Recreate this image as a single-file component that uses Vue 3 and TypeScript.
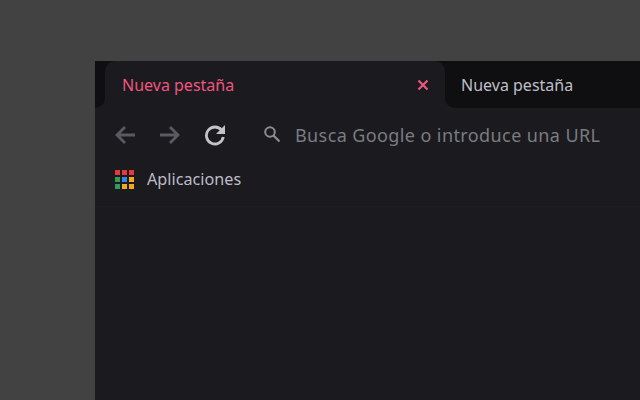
<script setup lang="ts">
const colors: string[] = ['#e5383f','#e5383f','#e5383f','#2f9e55','#2f86ea','#f5a818','#2f9e55','#f5a818','#f5a818']
</script>

<template>
  <div class="page">
    <div class="win">
      <div class="strip">
        <div class="edge"></div>
        <div class="tab active">
          <span class="title">Nueva pestaña</span>
          <svg class="close" width="12" height="12" viewBox="0 0 12 12"><path d="M1.500 1.500 10.500 10.500M10.500 1.500 1.500 10.500" stroke="#e8587f" stroke-width="2.200" fill="none"/></svg>
        </div>
        <div class="tab other"><span class="title2">Nueva pestaña</span></div>
      </div>
      <div class="toolbar">
        <svg class="nav" width="22" height="22" viewBox="0 0 22 22"><path d="M21 11H3M11 3l-8 8 8 8" stroke="#5a5b60" stroke-width="2.800" fill="none"/></svg>
        <svg class="nav" width="22" height="22" viewBox="0 0 22 22"><path d="M1 11H19M11 3l8 8-8 8" stroke="#5a5b60" stroke-width="2.800" fill="none"/></svg>
        <svg class="nav" width="22" height="22" viewBox="0 0 22 22"><path d="M17.600 6.200A8.500 8.500 0 1 0 19.300 13" stroke="#c4c4c6" stroke-width="2.800" fill="none"/><path d="M21 1V10h-9z" fill="#c4c4c6"/></svg>
        <svg class="search" width="18" height="18" viewBox="0 0 18 18"><circle cx="7" cy="7" r="4.800" stroke="#8c8d91" stroke-width="2" fill="none"/><path d="M10.500 10.500 16.500 16.500" stroke="#8c8d91" stroke-width="2.200"/></svg>
        <span class="url">Busca Google o introduce una URL</span>
      </div>
      <div class="bookmarks">
        <div class="apps"><i v-for="(c,i) in colors" :key="i" :style="{background:c}"></i></div>
        <span class="bm">Aplicaciones</span>
      </div>
    </div>
  </div>
</template>

<style>
html,body{margin:0;background:#424242;overflow:hidden}
</style>
<style scoped>
.page{width:640px;height:400px;background:#424242;padding:61px 0 0 95px;box-sizing:border-box;overflow:hidden;font-family:"Noto Sans","Open Sans",sans-serif}
.win{width:545px;height:339px;background:#1a1a1f;display:flex;flex-direction:column}
.strip{height:47px;background:linear-gradient(#0f0f11 50%,#1a1a1f 50%);display:flex;flex:none}
.edge{width:10px;background:#0f0f11;border-bottom-right-radius:10px;flex:none}
.tab{display:flex;align-items:center;box-sizing:border-box}
.active{width:340px;background:#1a1a1f;border-radius:10px 10px 0 0;padding:0 16px 0 17px;justify-content:space-between;flex:none}
.other{flex:1;padding-left:16px;background:#0f0f11;border-bottom-left-radius:10px}
.title{color:#f0557f;font-size:16px}
.title2{color:#bfbfc8;font-size:16px}
.toolbar{height:53px;display:flex;align-items:center;padding-left:19px;flex:none}
.nav{margin-right:23px}
.search{margin-left:14px;margin-right:14px;margin-top:-1px}
.url{color:#7b7c81;font-size:18px;letter-spacing:.4px}
.bookmarks{height:46px;display:flex;align-items:center;padding:0 0 9px 20px;border-bottom:1px solid #1e1e23;box-sizing:border-box;flex:none}
.apps{display:grid;grid-template-columns:repeat(3,5px);grid-auto-rows:5px;gap:2px;margin-right:13px}
.bm{color:#bdbdc6;font-size:16.200px}
</style>
